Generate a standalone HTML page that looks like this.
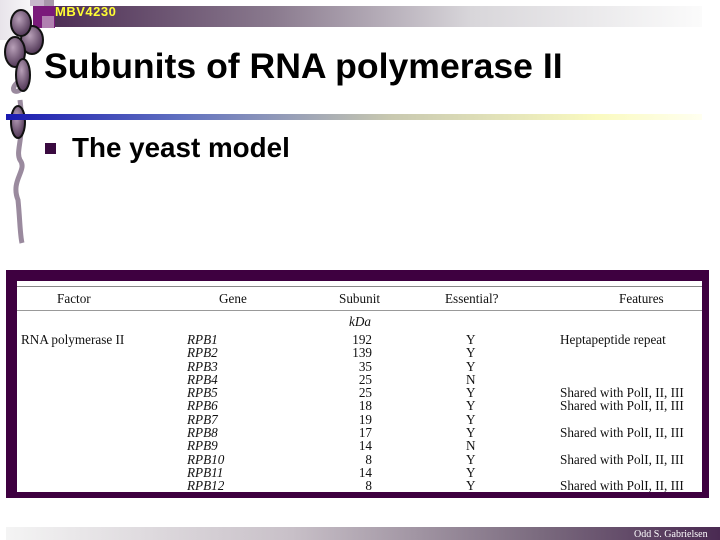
<!DOCTYPE html>
<html><head><meta charset="utf-8"><style>
body{margin:0;width:720px;height:540px;background:#fff;position:relative;overflow:hidden;font-family:"Liberation Sans",sans-serif}
.a{position:absolute}
.t{font-family:"Liberation Serif",serif;font-size:13.2px;color:#111;position:absolute;white-space:nowrap;line-height:13px}
.i{font-style:italic}
</style></head><body>
<div class="a" style="left:42px;top:6px;width:660px;height:21px;background:linear-gradient(90deg,#4a2a52,#8a7a8e 35%,#d8d6da 65%,#fbfbfb)"></div>
<div class="a" style="left:0;top:0;width:45px;height:40px;background:linear-gradient(90deg,#e8e4ea,#fff)"></div>
<div class="a" style="left:30px;top:0;width:14px;height:6px;background:#c8b8cc"></div>
<div class="a" style="left:44px;top:0;width:10px;height:8px;background:#a898aa"></div>
<div class="a" style="left:33px;top:6px;width:22px;height:22px;background:#7a1a7a"></div>
<div class="a" style="left:42px;top:16px;width:12px;height:12px;background:#b080b0"></div>
<div class="a" style="left:55px;top:4px;font-size:13px;font-weight:bold;color:#ffff33;letter-spacing:0.5px">MBV4230</div>
<svg class="a" style="left:0;top:0" width="60" height="250">
<defs><radialGradient id="g" cx="0.4" cy="0.35" r="0.7"><stop offset="0" stop-color="#b8a0b8"/><stop offset="1" stop-color="#4a3050"/></radialGradient></defs>
<path d="M22 80 C10 85 12 95 20 90 M20 100 C25 140 15 150 20 160 C28 170 10 180 18 200 C20 220 20 235 22 243" stroke="#9a8a9e" stroke-width="5" fill="none"/>
<ellipse cx="32" cy="40" rx="11" ry="14" fill="url(#g)" stroke="#111" stroke-width="2"/>
<ellipse cx="21" cy="23" rx="10" ry="13" fill="url(#g)" stroke="#111" stroke-width="2"/>
<ellipse cx="15" cy="52" rx="10" ry="15" fill="url(#g)" stroke="#111" stroke-width="2"/>
<ellipse cx="23" cy="75" rx="7" ry="16" fill="url(#g)" stroke="#111" stroke-width="2"/>
<ellipse cx="18" cy="122" rx="7" ry="16" fill="url(#g)" stroke="#111" stroke-width="2"/>
</svg>
<div class="a" style="left:44px;top:46px;font-size:35.6px;font-weight:bold;color:#000">Subunits of RNA polymerase II</div>
<div class="a" style="left:6px;top:114px;width:696px;height:6px;background:linear-gradient(90deg,#1a1ab0,#6070c0 25%,#c8c8b0 55%,#fafac0 85%,#fffff0)"></div>
<div class="a" style="left:45px;top:143px;width:11px;height:11px;background:#3a0a40"></div>
<div class="a" style="left:72px;top:132px;font-size:27.8px;font-weight:bold;color:#000">The yeast model</div>
<div class="a" style="left:6px;top:270px;width:703px;height:228px;background:#3e0040"></div>
<div class="a" style="left:17px;top:281px;width:685px;height:211px;background:#fff"></div>
<div class="a" style="left:17px;top:286px;width:685px;height:1px;background:#888"></div>
<div class="a" style="left:17px;top:310px;width:685px;height:1px;background:#999"></div>
<div class="t" style="left:57px;top:292px">Factor</div>
<div class="t" style="left:219px;top:292px">Gene</div>
<div class="t" style="left:339px;top:292px">Subunit</div>
<div class="t" style="left:445px;top:292px">Essential?</div>
<div class="t" style="left:619px;top:292px">Features</div>
<div class="t i" style="left:349px;top:315px">kDa</div>
<div class="t" style="left:21px;top:333px">RNA polymerase II</div>
<div class="t i" style="left:187px;top:333px;line-height:13.3px">RPB1<br>RPB2<br>RPB3<br>RPB4<br>RPB5<br>RPB6<br>RPB7<br>RPB8<br>RPB9<br>RPB10<br>RPB11<br>RPB12</div>
<div class="t" style="left:340px;width:32px;text-align:right;top:333px;line-height:13.3px">192<br>139<br>35<br>25<br>25<br>18<br>19<br>17<br>14<br>8<br>14<br>8</div>
<div class="t" style="left:466px;top:333px;line-height:13.3px">Y<br>Y<br>Y<br>N<br>Y<br>Y<br>Y<br>Y<br>N<br>Y<br>Y<br>Y</div>
<div class="t" style="left:560px;top:333px;line-height:13.3px">Heptapeptide repeat<br><br><br><br>Shared with PolI, II, III<br>Shared with PolI, II, III<br><br>Shared with PolI, II, III<br><br>Shared with PolI, II, III<br><br>Shared with PolI, II, III</div>
<div class="a" style="left:6px;top:527px;width:714px;height:13px;background:linear-gradient(90deg,#f4f4f4,#c8c0c8 40%,#7a6a7e 75%,#4a2a52)"></div>
<div class="a" style="left:634px;top:529px;font-family:'Liberation Serif',serif;font-size:10px;color:#fff">Odd S. Gabrielsen</div>
</body></html>
